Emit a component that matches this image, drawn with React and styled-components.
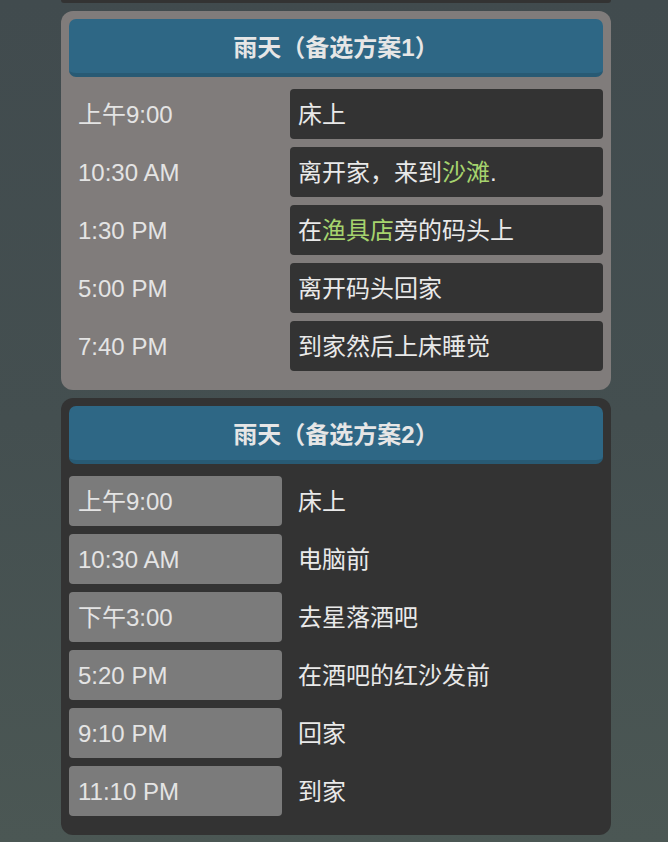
import styled, { createGlobalStyle } from "styled-components";

const GlobalStyle = createGlobalStyle`
	html, body {
		margin: 0;
		padding: 0;
	}
	body {
		min-height: 842px;
		background: linear-gradient(180deg, #414b4e 0%, #444f50 50%, #4b5754 100%);
		font-family: "Liberation Sans", "Noto Sans CJK SC", sans-serif;
		color: #e9e9e9;
	}
`;

const Page = styled.div`
	display: flex;
	flex-direction: column;
	gap: 8px;
	width: 550px;
	margin-left: 61px;
	padding-bottom: 6px;
`;

const PrevCardEdge = styled.div`
	height: 3px;
	background: #333333;
	border-radius: 0 0 12px 12px;
`;

const Card = styled.section`
	background: ${(p) => (p.$light ? "#807c7b" : "#333333")};
	border-radius: 12px;
	padding: 8px 8px 19px;
`;

const Title = styled.h2`
	box-sizing: border-box;
	margin: 0 0 12px;
	height: 58px;
	padding-top: 4px;
	display: flex;
	align-items: center;
	justify-content: center;
	background: #2e6785;
	border-bottom: 4px solid #285a74;
	border-radius: 7px;
	font-size: 24px;
	line-height: 30px;
	font-weight: bold;
	color: #e6e6e6;
`;

const Rows = styled.div`
	display: grid;
	grid-template-columns: 213px 1fr;
	grid-auto-rows: 50px;
	gap: 8px;
`;

const Cell = styled.div`
	display: flex;
	align-items: center;
	padding: 2px 8px 0;
	font-size: 24px;
	line-height: 30px;
	border-radius: 4px;
	background: ${(p) => p.$bg || "transparent"};
	white-space: nowrap;
`;

const Time = styled(Cell)`
	padding-left: 9px;
	color: #e4e4e4;
`;

const Place = styled.span`
	color: #a6d46e;
`;

const planOne = [
	["上午9:00", "床上"],
	["10:30 AM", <>离开家，来到<Place>沙滩</Place>.</>],
	["1:30 PM", <>在<Place>渔具店</Place>旁的码头上</>],
	["5:00 PM", "离开码头回家"],
	["7:40 PM", "到家然后上床睡觉"],
];

const planTwo = [
	["上午9:00", "床上"],
	["10:30 AM", "电脑前"],
	["下午3:00", "去星落酒吧"],
	["5:20 PM", "在酒吧的红沙发前"],
	["9:10 PM", "回家"],
	["11:10 PM", "到家"],
];

function Schedule({ title, rows, light }) {
	return (
		<Card $light={light}>
			<Title>{title}</Title>
			<Rows>
				{rows.map(([time, what], i) => [
					<Time key={"t" + i} $bg={light ? null : "#7b7b7b"}>
						{time}
					</Time>,
					<Cell key={"w" + i} $bg={light ? "#333333" : null}>
						{what}
					</Cell>,
				])}
			</Rows>
		</Card>
	);
}

export default function App() {
	return (
		<>
			<GlobalStyle />
			<Page>
				<PrevCardEdge />
				<Schedule title="雨天（备选方案1）" rows={planOne} light />
				<Schedule title="雨天（备选方案2）" rows={planTwo} />
			</Page>
		</>
	);
}
